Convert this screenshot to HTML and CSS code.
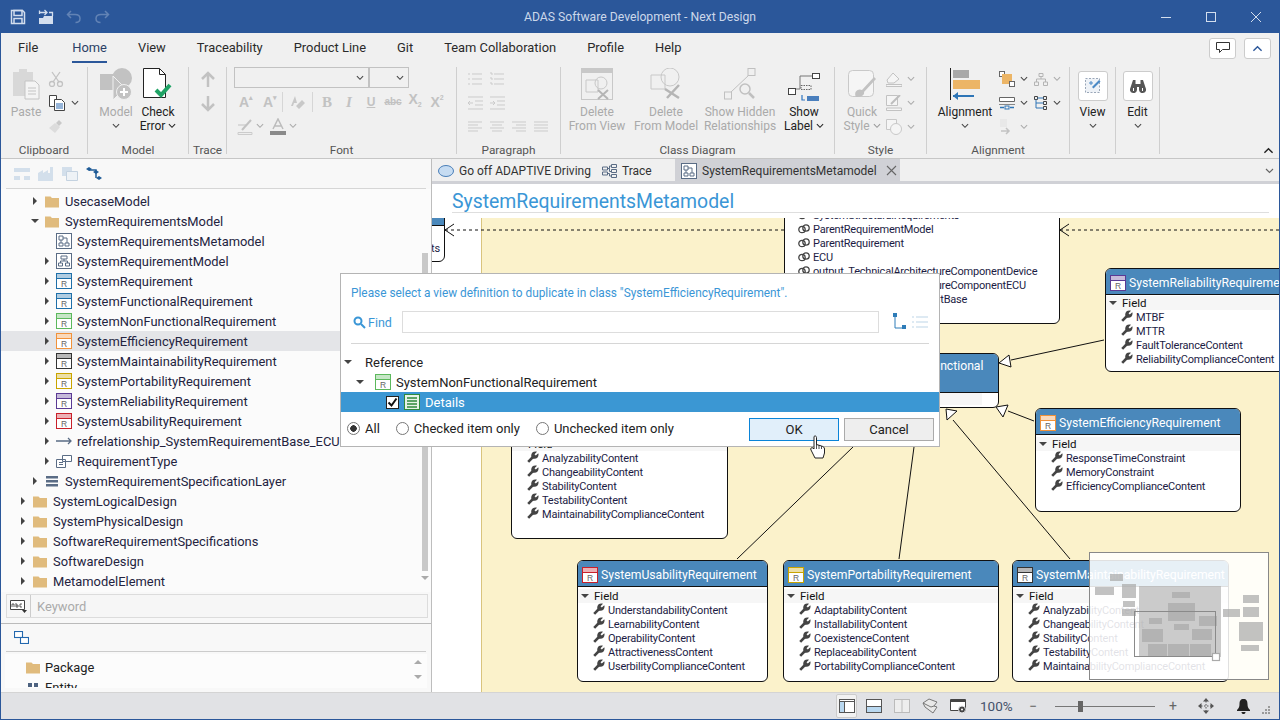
FILE: index.html
```html
<!DOCTYPE html>
<html lang="en">
<head>
<meta charset="utf-8">
<title>ADAS Software Development - Next Design</title>
<link rel="stylesheet" href="styles.css">
</head>
<body>
<svg class="defs" width="0" height="0">
  <symbol id="cls" viewBox="0 0 16 16"><rect x=".5" y=".5" width="15" height="15" fill="#fff" stroke="currentColor"/><rect x="1" y="1" width="14" height="4" fill="currentColor" opacity=".35"/><path d="M1 5.500h14" stroke="currentColor"/><text x="8" y="14" font-size="8.500" text-anchor="middle" fill="#666" font-family="Liberation Sans">R</text></symbol>
  <symbol id="folder" viewBox="0 0 14 14"><path d="M0 2.500h5.500l1.500 1.500h7v9.500H0z" fill="#e0bb7d"/></symbol>
  <symbol id="wrench" viewBox="0 0 12 12"><path d="M1.200 10.800L6 6" stroke="#444" stroke-width="2.600"/><path d="M4.300 5.500C3.700 2 6.500-.3 10 .8L7.500 3.300l1.300 1.300L11.300 2.200c1.100 3.400-1.600 6.300-5 5.500z" fill="#444"/></symbol>
  <symbol id="link" viewBox="0 0 12 10"><circle cx="4" cy="5.500" r="3.200" fill="none" stroke="#444" stroke-width="1.300"/><circle cx="8" cy="4" r="3.200" fill="none" stroke="#444" stroke-width="1.300"/></symbol>
  <symbol id="chev" viewBox="0 0 9 6"><path d="M1 1l3.500 3.500L8 1" fill="none" stroke="currentColor" stroke-width="1.200"/></symbol>
  <symbol id="diag" viewBox="0 0 16 16"><rect x=".5" y=".5" width="15" height="15" fill="#fff" stroke="#5a6c85"/><path d="M3 3h4v4H3zM9 10h4v3H9zM3 10h4v3H3zM5 7v3M7 5h4v5" fill="none" stroke="#5a6c85"/></symbol>
  <symbol id="diag2" viewBox="0 0 16 16"><rect x=".5" y=".5" width="15" height="15" fill="#fff" stroke="#5a6c85"/><path d="M5 3h6v3H5zM2.500 10h4v3h-4zM9.500 10h4v3h-4zM8 6v2M4.500 10V8h7v2" fill="none" stroke="#5a6c85"/></symbol>
</svg>

<div class="app">
  <header class="titlebar">
    <div class="qat">
      <svg width="16" height="16" viewBox="0 0 16 16"><path d="M1.500 1.500h11l2 2v11h-13z" fill="none" stroke="#d3deee" stroke-width="1.500"/><path d="M4 1.500h8v5H4zM4 14.500V9.500h8v5" fill="none" stroke="#d3deee" stroke-width="1.500"/></svg>
      <svg width="16" height="16" viewBox="0 0 16 16"><path d="M1 9h4l1-2h9v8H1z" fill="#d3deee"/><path d="M1.500 5V1.500M1.500 3.500h7M6.500 1l2.500 2.500L6.500 6M11 3.500h3.500V7" fill="none" stroke="#d3deee" stroke-width="1.300"/></svg>
      <svg class="dim" width="16" height="16" viewBox="0 0 16 16"><path d="M5 2L1.500 5.500 5 9M2 5.500h7c3 0 5 1.500 5 4s-2 4-4.500 4" fill="none" stroke="#6283b5" stroke-width="1.500"/></svg>
      <svg class="dim" width="16" height="16" viewBox="0 0 16 16"><path d="M11 2l3.500 3.500L11 9M14 5.500H7c-3 0-5 1.500-5 4s2 4 4.500 4" fill="none" stroke="#6283b5" stroke-width="1.500"/></svg>
    </div>
    <div class="apptitle">ADAS Software Development - Next Design</div>
    <div class="winctl">
      <svg width="12" height="12" viewBox="0 0 12 12"><path d="M1 6.500h10" stroke="#d3deee"/></svg>
      <svg width="12" height="12" viewBox="0 0 12 12"><rect x="1.500" y="1.500" width="9" height="9" fill="none" stroke="#d3deee"/></svg>
      <svg width="12" height="12" viewBox="0 0 12 12"><path d="M1 1l10 10M11 1L1 11" stroke="#d3deee"/></svg>
    </div>
  </header>

  <nav class="menubar">
    <span>File</span><span class="active">Home</span><span>View</span><span>Traceability</span><span>Product Line</span><span>Git</span><span>Team Collaboration</span><span>Profile</span><span>Help</span>
    <div class="menu-right">
      <button class="mini"><svg width="16" height="14" viewBox="0 0 16 14"><path d="M1.500 1.500h13v7h-7l-3 3v-3h-3z" fill="#fff" stroke="#333"/></svg></button>
      <button class="mini"><svg width="11" height="7" viewBox="0 0 9 6"><path d="M1 5l3.500-3.500L8 5" fill="none" stroke="#2b579a" stroke-width="1.200"/></svg></button>
    </div>
  </nav>

  <section class="ribbon">
    <div class="group g-clip">
      <div class="g-body">
        <div class="big w50 off"><div class="bi"><svg width="30" height="34" viewBox="0 0 30 34"><path d="M2 4h6V1h8v3h6v24H2z" fill="#d8d8d8"/><path d="M14 13h10l4 4v14H14z" fill="#f4f4f4" stroke="#c4c4c4"/><path d="M17 20h8M17 23h8M17 26h8" stroke="#c4c4c4"/></svg></div><span>Paste</span></div>
        <div class="col cx">
          <div class="row"><svg width="16" height="16" viewBox="0 0 16 16"><circle cx="4" cy="13" r="2.500" fill="none" stroke="#c2c2c2" stroke-width="1.300"/><circle cx="12" cy="13" r="2.500" fill="none" stroke="#c2c2c2" stroke-width="1.300"/><path d="M5 11L12 1M11 11L4 1" stroke="#c2c2c2" stroke-width="1.300"/></svg></div>
          <div class="row"><svg width="18" height="18" viewBox="0 0 18 18"><path d="M1.500 1.500h7v11h-7z" fill="#fff" stroke="#444"/><path d="M6.500 5.500h7l3 3v8h-10z" fill="#fff" stroke="#444"/><path d="M8 10h7M8 12h7M8 14h7" stroke="#2e6db4"/></svg><svg class="ch" width="8" height="6"><use href="#chev"/></svg></div>
          <div class="row"><svg width="16" height="16" viewBox="0 0 16 16"><path d="M1 9l6-5 5 4-5 6z" fill="#dcdcdc"/><path d="M8 4l3-3 3 3-3 3z" fill="#c9c9c9"/></svg></div>
        </div>
      </div>
      <div class="g-label">Clipboard</div>
    </div>

    <div class="group g-model">
      <div class="g-body">
        <div class="big w50 off"><div class="bi"><svg width="32" height="32" viewBox="0 0 32 32"><circle cx="22" cy="10" r="10" fill="#c2c2c2"/><path d="M0 6h16v16H0z" fill="#c2c2c2"/><path d="M13 8l12 12-12 12z" fill="#c2c2c2" stroke="#f0f0f0"/><circle cx="24" cy="24" r="7.500" fill="#c2c2c2" stroke="#f0f0f0"/><path d="M24 20v8M20 24h8" stroke="#fff" stroke-width="2"/></svg></div><span>Model</span><svg class="ch" width="8" height="6"><use href="#chev"/></svg></div>
        <div class="big w34"><div class="bi"><svg width="30" height="32" viewBox="0 0 30 32"><path d="M.5.500h16l6 6v23H.5z" fill="#fff" stroke="#222"/><path d="M16.500.500v6h6" fill="none" stroke="#222"/><path d="M13 22l5 5 9-10" fill="none" stroke="#1fa365" stroke-width="4"/></svg></div><span>Check</span><span>Error <svg class="ch2" width="8" height="6"><use href="#chev"/></svg></span></div>
      </div>
      <div class="g-label">Model</div>
    </div>

    <div class="group g-trace">
      <div class="g-body col-c">
        <div class="row"><svg width="14" height="17" viewBox="0 0 14 17"><path d="M7 16V2M1 8l6-6 6 6" fill="none" stroke="#c2c2c2" stroke-width="2.500"/></svg></div>
        <div class="row"><svg width="14" height="17" viewBox="0 0 14 17"><path d="M7 1v14M1 9l6 6 6-6" fill="none" stroke="#c2c2c2" stroke-width="2.500"/></svg></div>
      </div>
      <div class="g-label">Trace</div>
    </div>

    <div class="group g-font">
      <div class="g-body fontbody">
        <div class="selects"><div class="sel s1"><svg class="ch" width="8" height="6"><use href="#chev"/></svg></div><div class="sel s2"><svg class="ch" width="8" height="6"><use href="#chev"/></svg></div></div>
        <div class="frow r2">
          <span class="fi a1">A<sup>▴</sup></span><span class="fi a2">A<sup>▾</sup></span><i class="vs"></i>
          <span class="fi w28"><svg width="16" height="16" viewBox="0 0 16 16"><path d="M5 2l-4 10h2l1-3h3M9 15l-3-3 6-6 3 3z" fill="#c8c8c8"/></svg></span><i class="vs"></i>
          <span class="fi ml3 bold">B</span><span class="fi ital">I</span><span class="fi und">U</span><span class="fi strike">abc</span><span class="fi sub">X<small>2</small></span><span class="fi sup2">X<small>2</small></span>
        </div>
        <div class="frow r3">
          <svg width="16" height="17" viewBox="0 0 16 17"><path d="M1 14.500h14v2H1z" fill="#eee" stroke="#ccc"/><path d="M5 12l9-10" stroke="#c2c2c2" stroke-width="2"/><path d="M1 7h9" stroke="#c2c2c2"/></svg>
          <svg class="ch off-ch" width="8" height="6"><use href="#chev"/></svg>
          <svg class="ml7" width="16" height="17" viewBox="0 0 16 17"><path d="M3 11L8 1l5 10M5 8h6" fill="none" stroke="#bcbcbc" stroke-width="1.500"/><path d="M0 13h16v4H0z" fill="#8a8a8a"/></svg>
          <svg class="ch off-ch" width="8" height="6"><use href="#chev"/></svg>
        </div>
      </div>
      <div class="g-label">Font</div>
    </div>

    <div class="group g-para">
      <div class="g-body parabody">
        <div class="prow"><span class="pi"><svg width="16" height="14"><path d="M1 2h2M1 7h2M1 12h2M5 2h10M5 7h10M5 12h10" stroke="#cbcbcb"/></svg></span><span class="pi"><svg width="16" height="14"><path d="M1 1h2v2M1 6h2v2M1 11h2v2M5 2h10M5 7h10M5 12h10" fill="none" stroke="#cbcbcb"/></svg></span></div>
        <div class="prow"><span class="pi"><svg width="16" height="14"><path d="M1 1h15M8 5h8M8 9h8M1 13h15M6 7H1m2-2L1 7l2 2" fill="none" stroke="#cbcbcb"/></svg></span><span class="pi"><svg width="16" height="14"><path d="M1 1h15M8 5h8M8 9h8M1 13h15M1 7h5M4 5l2 2-2 2" fill="none" stroke="#cbcbcb"/></svg></span></div>
        <div class="prow"><span class="pi"><svg width="16" height="14"><path d="M1 2h14M1 5h10M1 8h14M1 11h10" stroke="#cbcbcb"/></svg></span><span class="pi"><svg width="16" height="14"><path d="M1 2h14M3 5h10M1 8h14M3 11h10" stroke="#cbcbcb"/></svg></span><span class="pi"><svg width="16" height="14"><path d="M1 2h14M5 5h10M1 8h14M5 11h10" stroke="#cbcbcb"/></svg></span><span class="pi"><svg width="16" height="14"><path d="M1 2h14M1 5h14M1 8h14M1 11h14" stroke="#cbcbcb"/></svg></span></div>
      </div>
      <div class="g-label">Paragraph</div>
    </div>

    <div class="group g-class">
      <div class="g-body">
        <div class="big w72 off"><div class="bi"><svg width="32" height="32" viewBox="0 0 32 32"><rect x=".5" y=".5" width="31" height="31" fill="none" stroke="#c8c8c8"/><rect width="32" height="5" fill="#c8c8c8"/><path d="M5 12h12v12H5z" fill="none" stroke="#c8c8c8"/><circle cx="20" cy="15" r="6" fill="none" stroke="#c8c8c8"/><path d="M17 22l10 9M27 22l-10 9" stroke="#b5b5b5" stroke-width="2"/></svg></div><span>Delete</span><span>From View</span></div>
        <div class="big w66 off"><div class="bi"><svg width="32" height="32" viewBox="0 0 32 32"><path d="M1 7h14v14H1z" fill="none" stroke="#c8c8c8"/><circle cx="20" cy="9" r="9" fill="none" stroke="#c8c8c8"/><path d="M15 21l14 9M29 17L17 30" stroke="#b5b5b5" stroke-width="2.500"/></svg></div><span>Delete</span><span>From Model</span></div>
        <div class="big w82 off"><div class="bi"><svg width="32" height="32" viewBox="0 0 32 32"><rect x="24" y=".5" width="7" height="7" fill="none" stroke="#c0c0c0"/><rect x=".5" y="24" width="7" height="7" fill="none" stroke="#c0c0c0"/><path d="M7 24L25 7" stroke="#c0c0c0"/><circle cx="21" cy="21" r="5" fill="#f0f0f0" stroke="#c0c0c0" stroke-width="1.500"/><path d="M25 25l5 5" stroke="#c0c0c0" stroke-width="2.500"/></svg></div><span>Show Hidden</span><span>Relationships</span></div>
        <div class="big w46"><div class="bi pt5"><svg width="32" height="28" viewBox="0 0 32 28"><rect x="24.500" y=".5" width="7" height="5" fill="#fff" stroke="#444"/><rect x=".5" y="15.500" width="7" height="6" fill="#fff" stroke="#444"/><path d="M24 3H12v13H8" fill="none" stroke="#777"/><rect x="13" y="12.500" width="10" height="4" fill="none" stroke="#666" stroke-dasharray="1.500 1"/><rect x="19" y="23" width="12" height="5" fill="#4a7fbd"/><path d="M14 22v5h3" fill="none" stroke="#2e75c0" stroke-width="1.200"/></svg></div><span>Show</span><span>Label <svg class="ch2" width="8" height="6"><use href="#chev"/></svg></span></div>
      </div>
      <div class="g-label">Class Diagram</div>
    </div>

    <div class="group g-style">
      <div class="g-body">
        <div class="big w54 off"><div class="bi pt4"><svg width="28" height="28" viewBox="0 0 28 28"><rect x=".5" y=".5" width="25" height="26" rx="4" fill="#f5f5f5" stroke="#c9c9c9"/><path d="M8 27c-3-6 3-9 6-7l12-13 2 2-12 13c1 3-3 5-8 5z" fill="#c2c2c2"/></svg></div><span>Quick</span><span>Style <svg class="ch2 dimch" width="8" height="6"><use href="#chev"/></svg></span></div>
        <div class="col stylecol">
          <div class="row"><svg width="16" height="16" viewBox="0 0 16 16"><path d="M1 9l6-7 6 6-5 4H2zM0 13.500h16v2H0z" fill="#f5f5f5" stroke="#c2c2c2"/></svg><svg class="ch off-ch" width="8" height="6"><use href="#chev"/></svg></div>
          <div class="row"><svg width="16" height="16" viewBox="0 0 16 16"><path d="M.5.500h11v10H.5zM.5 13h15v2.500H.5z" fill="#f5f5f5" stroke="#c2c2c2"/><path d="M5 9l9-9" stroke="#bdbdbd" stroke-width="2"/></svg><svg class="ch off-ch" width="8" height="6"><use href="#chev"/></svg></div>
          <div class="row"><svg width="16" height="16" viewBox="0 0 16 16"><path d="M.5.500h10v10H.5z" fill="#f5f5f5" stroke="#c8c8c8"/><circle cx="10" cy="10" r="5.500" fill="#f5f5f5" stroke="#c8c8c8"/></svg><svg class="ch off-ch" width="8" height="6"><use href="#chev"/></svg></div>
        </div>
      </div>
      <div class="g-label">Style</div>
    </div>

    <div class="group g-align">
      <div class="g-body">
        <div class="big w76"><div class="bi"><svg width="30" height="33" viewBox="0 0 30 33"><path d="M.5 0v32" stroke="#222"/><rect x="3" y="2" width="16" height="8" fill="#a8a8a8"/><rect x="3" y="12" width="27" height="9" fill="#ecb566"/><path d="M3 28h21" stroke="#2e75b6" stroke-width="2"/><path d="M8 24l-5 4 5 4z" fill="#2e75b6"/></svg></div><span>Alignment</span><svg class="ch" width="8" height="6"><use href="#chev"/></svg></div>
        <div class="col alcol1">
          <div class="row"><svg width="16" height="16" viewBox="0 0 16 16"><rect x=".5" y=".5" width="5" height="5" fill="#fff" stroke="#666"/><rect x="3" y="3" width="10" height="10" fill="#ecb566"/><rect x="10.500" y="10.500" width="5" height="5" fill="#fff" stroke="#666"/></svg><svg class="ch" width="8" height="6"><use href="#chev"/></svg></div>
          <div class="row"><svg width="16" height="16" viewBox="0 0 16 16"><path d="M.5 2.500h15v4H.5z" fill="#fff" stroke="#666"/><path d="M0 9.500h16" stroke="#888"/><rect x="6" y="11" width="4" height="3" fill="none" stroke="#2e75b6"/><path d="M1 12.500h4M11 12.500h4" stroke="#2e75b6" stroke-width="1.500"/></svg><svg class="ch" width="8" height="6"><use href="#chev"/></svg></div>
          <div class="row"><svg width="16" height="16" viewBox="0 0 16 16"><path d="M1 0h7v4H1zM1 4h7v4H1z" fill="#e8e8e8"/><path d="M2 12h8M7 9l3 3-3 3" fill="none" stroke="#c2c2c2" stroke-width="1.500"/></svg><svg class="ch off-ch" width="8" height="6"><use href="#chev"/></svg></div>
        </div>
        <div class="col alcol2">
          <div class="row"><svg width="14" height="13" viewBox="0 0 14 13"><path d="M5 .5h4v3H5zM.5 9h4v3.500h-4zM9.500 9h4v3.500h-4zM7 3.500V6M2.500 9V6h9v3" fill="none" stroke="#b4b4b4"/></svg><svg class="ch off-ch" width="8" height="6"><use href="#chev"/></svg></div>
          <div class="row"><svg width="14" height="14" viewBox="0 0 14 14"><path d="M.5.500h3v3h-3zM9.500.500h3v3h-3zM9.500 5.500h3v3h-3zM9.500 10.500h3v3h-3z" fill="none" stroke="#444"/><path d="M3.500 2h6M2 3.500V12h7.500M2 7h7.500" fill="none" stroke="#2e75b6"/></svg><svg class="ch" width="8" height="6"><use href="#chev"/></svg></div>
        </div>
      </div>
      <div class="g-label">Alignment</div>
    </div>

    <div class="group g-view">
      <div class="g-body"><div class="big wfull"><div class="bbox"><svg width="16" height="16" viewBox="0 0 16 16"><rect x=".5" y=".5" width="14" height="14" fill="#eef2f7" stroke="#9aa7b8" stroke-dasharray="2 1.500"/><path d="M7 9l7-7 1.500 1.500-7 7z" fill="#4a89c6"/><path d="M6 3v4M4 5h4" stroke="#4a89c6"/></svg></div><span>View</span><svg class="ch" width="8" height="6"><use href="#chev"/></svg></div></div>
    </div>
    <div class="group g-edit">
      <div class="g-body"><div class="big wfull"><div class="bbox"><svg width="16" height="13" viewBox="0 0 16 13"><path d="M3 0h2.500v4h5V0H13l3 9a3.500 3.500 0 1 1-7 1V7H7v3a3.500 3.500 0 1 1-7-1z" fill="#555"/><path d="M3.500 8v3M12.500 8v3" stroke="#fff"/></svg></div><span>Edit</span><svg class="ch" width="8" height="6"><use href="#chev"/></svg></div></div>
    </div>
    <svg class="collapse" width="11" height="7" viewBox="0 0 9 6"><path d="M1 5l3.500-3.500L8 5" fill="none" stroke="#222" stroke-width="1.200"/></svg>
  </section>

  <main class="main">
    <aside class="left">
      <div class="ltool">
        <svg width="16" height="14" viewBox="0 0 16 14"><path d="M0 1h16v4H0zM0 9h6v4H0zM10 9h6v4h-6z" fill="#d3dfeb"/></svg>
        <svg width="16" height="14" viewBox="0 0 16 14"><path d="M0 6l5-3v3l5-3v3h2V0h3v14H0z" fill="#d3dfeb"/></svg>
        <svg width="16" height="14" viewBox="0 0 16 14"><path d="M0 0h10v9H0z" fill="#d3dfeb"/><path d="M4.500 4.500h11v9h-11z" fill="#eef2f6" stroke="#c4d2e0"/></svg>
        <svg width="16" height="14" viewBox="0 0 16 14"><path d="M0 2l3-2 3 2-3 2zM7 5l3-2 3 2-3 2zM10 11l3-2 3 2-3 2z" fill="#1f5b97"/><path d="M3 3h7v8" fill="none" stroke="#1f5b97" stroke-width="1.500"/></svg>
      </div>
      <div class="treewrap">
        <div class="tree">
          <div class="r l1"><b class="ar"></b><svg class="ic" width="14" height="14"><use href="#folder"/></svg>UsecaseModel</div>
          <div class="r l1"><b class="ar dn"></b><svg class="ic" width="14" height="14"><use href="#folder"/></svg>SystemRequirementsModel</div>
          <div class="r l2"><b class="ar none"></b><svg class="ic" width="16" height="16"><use href="#diag"/></svg>SystemRequirementsMetamodel</div>
          <div class="r l2"><b class="ar"></b><svg class="ic" width="16" height="16"><use href="#diag2"/></svg>SystemRequirementModel</div>
          <div class="r l2"><b class="ar"></b><svg class="ic c-blue" width="16" height="16"><use href="#cls"/></svg>SystemRequirement</div>
          <div class="r l2"><b class="ar"></b><svg class="ic c-blue" width="16" height="16"><use href="#cls"/></svg>SystemFunctionalRequirement</div>
          <div class="r l2"><b class="ar"></b><svg class="ic c-green" width="16" height="16"><use href="#cls"/></svg>SystemNonFunctionalRequirement</div>
          <div class="r l2 sel-row"><b class="ar"></b><svg class="ic c-orange" width="16" height="16"><use href="#cls"/></svg>SystemEfficiencyRequirement</div>
          <div class="r l2"><b class="ar"></b><svg class="ic c-dark" width="16" height="16"><use href="#cls"/></svg>SystemMaintainabilityRequirement</div>
          <div class="r l2"><b class="ar"></b><svg class="ic c-yellow" width="16" height="16"><use href="#cls"/></svg>SystemPortabilityRequirement</div>
          <div class="r l2"><b class="ar"></b><svg class="ic c-purple" width="16" height="16"><use href="#cls"/></svg>SystemReliabilityRequirement</div>
          <div class="r l2"><b class="ar"></b><svg class="ic c-red" width="16" height="16"><use href="#cls"/></svg>SystemUsabilityRequirement</div>
          <div class="r l2"><b class="ar"></b><svg class="ic" width="16" height="16" viewBox="0 0 16 16"><path d="M0 8h15M12 5l3 3-3 3" fill="none" stroke="#5a6c85" stroke-width="1.300"/></svg>refrelationship_SystemRequirementBase_ECU</div>
          <div class="r l2"><b class="ar"></b><svg class="ic" width="16" height="16" viewBox="0 0 16 16"><path d="M6.500 2.500h9v6h-9zM.5 6.500h9v8h-9zM3 9.500h4M3 11.500h4" fill="#fff" stroke="#5a6c85"/></svg>RequirementType</div>
          <div class="r l1"><b class="ar"></b><svg class="ic" width="14" height="14" viewBox="0 0 14 14"><path d="M1 2h12v2.500H1zM1 6h12v2.500H1zM1 10h12v2.500H1z" fill="#5a6c85"/></svg>SystemRequirementSpecificationLayer</div>
          <div class="r l0"><b class="ar"></b><svg class="ic" width="14" height="14"><use href="#folder"/></svg>SystemLogicalDesign</div>
          <div class="r l0"><b class="ar"></b><svg class="ic" width="14" height="14"><use href="#folder"/></svg>SystemPhysicalDesign</div>
          <div class="r l0"><b class="ar"></b><svg class="ic" width="14" height="14"><use href="#folder"/></svg>SoftwareRequirementSpecifications</div>
          <div class="r l0"><b class="ar"></b><svg class="ic" width="14" height="14"><use href="#folder"/></svg>SoftwareDesign</div>
          <div class="r l0"><b class="ar"></b><svg class="ic" width="14" height="14"><use href="#folder"/></svg>MetamodelElement</div>
        </div>
        <div class="vscroll"><div class="thumb"></div><div class="sdn"></div></div>
      </div>
      <div class="searchbox">
        <div class="sb-icon"><svg width="17" height="13" viewBox="0 0 17 13"><path d="M.5.500h14v9H.5z" fill="#fff" stroke="#444"/><path d="M2 7V4h2v3M6 3v4h2V5H6M12 4h-2v3h2" fill="none" stroke="#333" stroke-width=".8"/><path d="M12 10h5l-2.500 3z" fill="#333"/></svg></div>
        <span class="kw">Keyword</span>
      </div>
      <div class="lsplit"></div>
      <div class="btool"><svg width="15" height="13" viewBox="0 0 15 13"><rect x=".5" y=".5" width="8" height="6" fill="#fff" stroke="#2468ae" stroke-width="1.100"/><rect x="6.500" y="6.500" width="8" height="6" fill="#fff" stroke="#2468ae" stroke-width="1.100"/></svg></div>
      <div class="palette">
        <div class="pal-list">
          <div class="pal"><svg class="ic" width="14" height="14"><use href="#folder"/></svg>Package</div>
          <div class="pal"><svg class="ic" width="14" height="14" viewBox="0 0 14 14"><path d="M2 3h4v4H2zM8 3h4v4H8z" fill="#4d6280"/></svg>Entity</div>
        </div>
        <div class="pal-scroll"><i class="up"></i><i class="down"></i></div>
      </div>
    </aside>

    <div class="work">
      <div class="doctabs">
        <div class="dt t1"><svg width="16" height="12" viewBox="0 0 16 12"><ellipse cx="8" cy="6" rx="7.500" ry="5.500" fill="#c6dcf2" stroke="#4a7fb8"/></svg>Go off ADAPTIVE Driving</div>
        <div class="dt t2"><svg width="15" height="14" viewBox="0 0 15 14"><path d="M.5 3h5v3h-5zM.5 8h5v3h-5zM9.500.500h5v3h-5zM9.500 5.500h5v3h-5zM9.500 10.500h5v3h-5zM5.500 4.500h2v-2.500h2M7.500 4.500v3h2M5.500 9.500h2v2.500h2" fill="none" stroke="#5a6c85"/></svg>Trace</div>
        <div class="dt t3"><svg width="16" height="16"><use href="#diag"/></svg>SystemRequirementsMetamodel<svg class="x" width="11" height="11" viewBox="0 0 11 11"><path d="M1 1l9 9M10 1l-9 9" stroke="#666" stroke-width="1.100"/></svg></div>
        <svg class="ch tabmenu" width="9" height="6"><use href="#chev"/></svg>
      </div>
      <div class="heading"><h1>SystemRequirementsMetamodel</h1></div>
      <div class="canvas">
        <div class="yellow"></div>
        <svg class="lines" width="848" height="473" viewBox="432 218 848 473">
          <g fill="none" stroke="#111">
            <path d="M445 230H784M1060 230H1280" stroke-dasharray="3 3"/>
            <path d="M454 224l-9 6 9 6M1069 224l-9 6 9 6"/>
            <path d="M1104 340L1011 360M1034 421L1008 411M953 420L1070 559M737 559L853 447M899 559L914 447"/>
            <path d="M999 363L1009 355 1011 367zM996 407L1008 405 1003 417zM946 409L957 411 947 420z" fill="#fff"/>
          </g>
        </svg>

        <div class="node n-tl"><div class="nh short"></div><div class="tl-text">Components</div></div>

        <div class="node n-big">
          <div class="it"><svg width="12" height="10"><use href="#link"/></svg>SystemStructuralRequirements</div>
          <div class="it"><svg width="12" height="10"><use href="#link"/></svg>ParentRequirementModel</div>
          <div class="it"><svg width="12" height="10"><use href="#link"/></svg>ParentRequirement</div>
          <div class="it"><svg width="12" height="10"><use href="#link"/></svg>ECU</div>
          <div class="it"><svg width="12" height="10"><use href="#link"/></svg>output_TechnicalArchitectureComponentDevice</div>
          <div class="it"><svg width="12" height="10"><use href="#link"/></svg>output_TechnicalArchitectureComponentECU</div>
          <div class="it"><svg width="12" height="10"><use href="#link"/></svg>output_SystemRequirementBase</div>
        </div>

        <div class="node n-rel">
          <div class="nh"><svg class="c-purple" width="16" height="16"><use href="#cls"/></svg>SystemReliabilityRequirement</div>
          <div class="nf"><b class="ar dn"></b>Field</div>
          <div class="ni"><svg width="12" height="12"><use href="#wrench"/></svg>MTBF</div>
          <div class="ni"><svg width="12" height="12"><use href="#wrench"/></svg>MTTR</div>
          <div class="ni"><svg width="12" height="12"><use href="#wrench"/></svg>FaultToleranceContent</div>
          <div class="ni"><svg width="12" height="12"><use href="#wrench"/></svg>ReliabilityComplianceContent</div>
        </div>

        <div class="node n-nf">
          <div class="nh tall"><svg class="c-green" width="16" height="16"><use href="#cls"/></svg>SystemNonFunctional</div>
          <div class="nf stub"></div>
        </div>

        <div class="node n-eff">
          <div class="nh"><svg class="c-orange" width="16" height="16"><use href="#cls"/></svg>SystemEfficiencyRequirement</div>
          <div class="nf"><b class="ar dn"></b>Field</div>
          <div class="ni"><svg width="12" height="12"><use href="#wrench"/></svg>ResponseTimeConstraint</div>
          <div class="ni"><svg width="12" height="12"><use href="#wrench"/></svg>MemoryConstraint</div>
          <div class="ni"><svg width="12" height="12"><use href="#wrench"/></svg>EfficiencyComplianceContent</div>
        </div>

        <div class="node n-mid">
          <div class="nh"><svg class="c-dark" width="16" height="16"><use href="#cls"/></svg>SystemMaintainabilityRequirement</div>
          <div class="nf"><b class="ar dn"></b>Field</div>
          <div class="ni"><svg width="12" height="12"><use href="#wrench"/></svg>AnalyzabilityContent</div>
          <div class="ni"><svg width="12" height="12"><use href="#wrench"/></svg>ChangeabilityContent</div>
          <div class="ni"><svg width="12" height="12"><use href="#wrench"/></svg>StabilityContent</div>
          <div class="ni"><svg width="12" height="12"><use href="#wrench"/></svg>TestabilityContent</div>
          <div class="ni"><svg width="12" height="12"><use href="#wrench"/></svg>MaintainabilityComplianceContent</div>
        </div>

        <div class="node n-usa">
          <div class="nh"><svg class="c-red" width="16" height="16"><use href="#cls"/></svg>SystemUsabilityRequirement</div>
          <div class="nf"><b class="ar dn"></b>Field</div>
          <div class="ni"><svg width="12" height="12"><use href="#wrench"/></svg>UnderstandabilityContent</div>
          <div class="ni"><svg width="12" height="12"><use href="#wrench"/></svg>LearnabilityContent</div>
          <div class="ni"><svg width="12" height="12"><use href="#wrench"/></svg>OperabilityContent</div>
          <div class="ni"><svg width="12" height="12"><use href="#wrench"/></svg>AttractivenessContent</div>
          <div class="ni"><svg width="12" height="12"><use href="#wrench"/></svg>UserbilityComplianceContent</div>
        </div>

        <div class="node n-por">
          <div class="nh"><svg class="c-yellow" width="16" height="16"><use href="#cls"/></svg>SystemPortabilityRequirement</div>
          <div class="nf"><b class="ar dn"></b>Field</div>
          <div class="ni"><svg width="12" height="12"><use href="#wrench"/></svg>AdaptabilityContent</div>
          <div class="ni"><svg width="12" height="12"><use href="#wrench"/></svg>InstallabilityContent</div>
          <div class="ni"><svg width="12" height="12"><use href="#wrench"/></svg>CoexistenceContent</div>
          <div class="ni"><svg width="12" height="12"><use href="#wrench"/></svg>ReplaceabilityContent</div>
          <div class="ni"><svg width="12" height="12"><use href="#wrench"/></svg>PortabilityComplianceContent</div>
        </div>

        <div class="node n-mai">
          <div class="nh"><svg class="c-dark" width="16" height="16"><use href="#cls"/></svg>SystemMaintainabilityRequirement</div>
          <div class="nf"><b class="ar dn"></b>Field</div>
          <div class="ni"><svg width="12" height="12"><use href="#wrench"/></svg>AnalyzabilityContent</div>
          <div class="ni"><svg width="12" height="12"><use href="#wrench"/></svg>ChangeabilityContent</div>
          <div class="ni"><svg width="12" height="12"><use href="#wrench"/></svg>StabilityContent</div>
          <div class="ni"><svg width="12" height="12"><use href="#wrench"/></svg>TestabilityContent</div>
          <div class="ni"><svg width="12" height="12"><use href="#wrench"/></svg>MaintainabilityComplianceContent</div>
        </div>

        <svg class="minimap" width="180" height="128" viewBox="1089 552 180 128">
          <rect x="1089.500" y="552.500" width="179" height="127" fill="#fff" fill-opacity=".87" stroke="#888"/>
          <g fill="#a8a8a8" fill-opacity=".7">
            <rect x="1139" y="586" width="82" height="71" fill-opacity=".6"/>
            <rect x="1172" y="592" width="18" height="6"/><rect x="1168" y="603" width="27" height="18"/><rect x="1199" y="616" width="18" height="10"/><rect x="1149" y="618" width="13" height="6"/><rect x="1174" y="624" width="15" height="6"/><rect x="1142" y="629" width="21" height="13"/><rect x="1192" y="629" width="20" height="11"/><rect x="1148" y="644" width="19" height="13"/><rect x="1168" y="644" width="21" height="13"/><rect x="1190" y="644" width="21" height="13"/>
            <rect x="1110" y="574" width="13" height="7"/><rect x="1095" y="587" width="19" height="8"/><rect x="1122" y="584" width="14" height="14"/><rect x="1123" y="601" width="12" height="6"/><rect x="1122" y="609" width="14" height="7"/>
            <rect x="1243" y="595" width="16" height="8"/><rect x="1243" y="607" width="16" height="10"/><rect x="1223" y="609" width="17" height="8"/><rect x="1239" y="622" width="24" height="19"/><rect x="1241" y="645" width="18" height="6"/>
          </g>
          <rect x="1134.500" y="611.500" width="81" height="45" fill="none" stroke="#8a8a8a"/>
          <rect x="1212.500" y="653.500" width="7" height="7" fill="#fff" stroke="#aaa" stroke-width="1.200"/>
        </svg>
      </div>
    </div>
  </main>

  <footer class="status">
    <span class="cell on"><svg width="16" height="14" viewBox="0 0 16 14"><rect x=".5" y=".5" width="15" height="13" fill="#fff" stroke="#555"/><rect x="1" y="3" width="4" height="10" fill="#b9d8f0"/><path d="M1 2.500h14M5.500 3v10" stroke="#555"/></svg></span>
    <span class="cell"><svg width="16" height="14" viewBox="0 0 16 14"><rect x=".5" y=".5" width="15" height="13" fill="#fff" stroke="#555"/><rect x="1" y="8" width="14" height="5" fill="#b9d8f0"/><path d="M1 7.500h14" stroke="#555"/></svg></span>
    <span class="cell"><svg width="16" height="14" viewBox="0 0 16 14"><rect x=".5" y=".5" width="15" height="13" fill="#eee" stroke="#bbb"/><path d="M8 1v12" stroke="#bbb"/></svg></span>
    <span class="cell"><svg width="17" height="16" viewBox="0 0 17 16"><path d="M1 5l6-4 8 3-3 4 3 1-4 6-8-6z" fill="#e8e8e8" stroke="#777"/><path d="M1 5l8 4 3-1" fill="none" stroke="#777"/></svg></span>
    <span class="cell"><svg width="17" height="16" viewBox="0 0 17 16"><path d="M.5 1.500h15v11H.5z" fill="#fff" stroke="#444"/><path d="M1 3h14" stroke="#444" stroke-width="2"/><circle cx="12" cy="11.500" r="3.500" fill="#444" stroke="#e1e2e5"/><circle cx="12" cy="11.500" r="1" fill="#fff"/></svg></span>
    <span class="zoomtxt">100%</span>
    <span class="zm">−</span>
    <span class="slider"><i></i></span>
    <span class="zp">+</span>
    <svg class="mv" width="16" height="16" viewBox="0 0 16 16"><path d="M8 0l3 3.500H5zM8 16l3-3.500H5zM0 8l3.500-3v6zM16 8l-3.500-3v6z" fill="#555"/><path d="M8 3v10M3 8h10" stroke="#555" stroke-width="1" stroke-dasharray="1.500 1.500"/></svg>
    <svg class="bell" width="15" height="15" viewBox="0 0 15 15"><path d="M7.500 0c3 0 4 2 4 5 0 3 .8 4.500 2.500 6v1H1v-1c1.700-1.500 2.500-3 2.500-6 0-3 1-5 4-5zM5.500 13h4c0 1.500-1 2-2 2s-2-.5-2-2z" fill="#222"/></svg>
    <svg class="grip" width="8" height="8" viewBox="0 0 8 8"><path d="M6 0h2v2H6zM3 3h2v2H3zM6 3h2v2H6zM0 6h2v2H0zM3 6h2v2H3zM6 6h2v2H6z" fill="#9a9a9a"/></svg>
  </footer>

  <div class="dialog">
    <div class="d-msg">Please select a view definition to duplicate in class "SystemEfficiencyRequirement".</div>
    <div class="d-find">
      <span class="d-flabel"><svg width="13" height="13" viewBox="0 0 13 13"><circle cx="5" cy="5" r="3.500" fill="none" stroke="#3a96d6" stroke-width="2"/><path d="M8 8l4 4" stroke="#3a96d6" stroke-width="2"/></svg>Find</span>
      <div class="d-input"></div>
      <svg class="d-i1" width="16" height="18" viewBox="0 0 16 18"><rect x="1" y="0" width="4" height="4" fill="#2e7cb8"/><path d="M3 4v11h8" fill="none" stroke="#2e7cb8"/><rect x="10" y="12" width="4" height="4" fill="#2e7cb8"/></svg>
      <svg class="d-i2" width="16" height="12" viewBox="0 0 16 12"><path d="M0 1h2M4 1h12M0 6h2M4 6h12M0 11h2M4 11h12" stroke="#d3e3f0" stroke-width="1.500"/></svg>
    </div>
    <div class="d-sep"></div>
    <div class="d-tree">
      <div class="dr d0"><b class="ar dn"></b>Reference</div>
      <div class="dr d1"><b class="ar dn"></b><svg class="c-green" width="16" height="16"><use href="#cls"/></svg>SystemNonFunctionalRequirement</div>
      <div class="dr d2 picked">
        <svg width="13" height="13" viewBox="0 0 13 13"><rect x=".5" y=".5" width="12" height="12" fill="#fff" stroke="#222"/><path d="M2.500 6.500l3 3 5-7" fill="none" stroke="#111" stroke-width="2"/></svg>
        <svg width="16" height="16" viewBox="0 0 16 16"><rect x=".5" y=".5" width="15" height="15" fill="#e7f3e7" stroke="#2f8a3c"/><path d="M3 4h10M3 7h10M3 10h10M3 13h10" stroke="#2f8a3c" stroke-width="1.300"/></svg>
        Details
      </div>
    </div>
    <div class="d-foot">
      <label class="rd rd1"><i class="radio on"></i>All</label>
      <label class="rd rd2"><i class="radio"></i>Checked item only</label>
      <label class="rd rd3"><i class="radio"></i>Unchecked item only</label>
      <div class="d-btns"><button class="btn ok">OK</button><button class="btn cancel">Cancel</button></div>
    </div>
  </div>
  <svg class="hand" width="15" height="24" viewBox="0 0 15 24"><path d="M4 1.500c1 -1 2.500 -.5 2.500 1v7l5 1.500c2 .6 3 1.500 3 3v4l-1.500 5H5L1 15c-1-1.500.5-3 2-2l1 1z" fill="#fff" stroke="#222"/><path d="M6.500 9v5M9 10v4M11.500 11v3" stroke="#222" stroke-width=".8"/></svg>
</div>
</body>
</html>
```
FILE: styles.css
```css
* { box-sizing: border-box; }
html, body { margin: 0; padding: 0; }
body { width: 1280px; height: 720px; overflow: hidden; font-family: Roboto, "Noto Sans", sans-serif; font-size: 12.9px; color: #222; }
.defs { position: absolute; }
svg { display: block; flex: none; }
.app { position: relative; width: 1280px; height: 720px; border: 1px solid #2b579a; background: #f0f0f0; display: flex; flex-direction: column; overflow: hidden; }

.c-blue { color: #1f6fa8; } .c-green { color: #5cb85c; } .c-orange { color: #f0923b; }
.c-dark { color: #333; } .c-yellow { color: #c9a400; } .c-purple { color: #5b3a94; } .c-red { color: #c8202a; }

/* title bar */
.titlebar { height: 32px; flex: none; background: #2b579a; display: flex; align-items: center; position: relative; }
.qat { display: flex; gap: 12px; padding-left: 9px; }
.apptitle { flex: 1; text-align: center; color: #cbd7ea; font-size: 12.2px; margin-left: 10px; }
.winctl { display: flex; gap: 33px; padding-right: 17px; }

/* menu */
.menubar { height: 30px; flex: none; display: flex; align-items: center; padding-left: 17px; gap: 31px; font-size: 12.9px; color: #2a2a2a; }
.menubar > span { position: relative; top: -1px; }
.menubar .active { margin-left: 3px; color: #2b3f66; }
.menubar .active::after { content: ""; position: absolute; left: 0; right: 0; top: 21px; height: 2px; background: #2b579a; }
.menu-right { margin-left: auto; display: flex; gap: 8px; padding-right: 8px; }
.mini { width: 27px; height: 21px; background: #fff; border: 1px solid #ccc; border-radius: 3px; padding: 0; display: flex; align-items: center; justify-content: center; }

/* ribbon */
.ribbon { height: 95px; flex: none; display: flex; position: relative; font-size: 12px; }
.group { margin-top: 4px; height: 87px; border-right: 1px solid #cfcfcf; flex: none; }
.g-body { height: 76px; display: flex; }
.g-label { text-align: center; line-height: 14px; font-size: 11.8px; color: #555; }
.g-clip { width: 87px; } .g-model { width: 101px; } .g-trace { width: 38px; } .g-font { width: 230px; }
.g-para { width: 104px; } .g-class { width: 274px; } .g-style { width: 92px; } .g-align { width: 143px; }
.g-view { width: 46px; } .g-edit { width: 44px; }
.big { display: flex; flex-direction: column; align-items: center; line-height: 14px; white-space: nowrap; color: #222; }
.big.off { color: #aaa; }
.bi { height: 38px; display: flex; align-items: flex-start; padding-top: 1px; }
.pt5 { padding-top: 6px; } .pt4 { padding-top: 3px; }
.w50 { width: 50px; } .w34 { width: 34px; } .w72 { width: 72px; } .w66 { width: 66px; } .w82 { width: 82px; } .w46 { width: 46px; } .w54 { width: 54px; } .w76 { width: 76px; } .wfull { width: 100%; }
.g-model .g-body { padding-left: 3px; }
.col { display: flex; flex-direction: column; }
.row { height: 24px; display: flex; align-items: center; gap: 3px; }
.ch { color: #444; margin: 4px auto 0; }
.ch2 { display: inline-block; color: #222; vertical-align: 1px; }
.dimch { color: #999; }
.off-ch { color: #aaa; margin: 0 0 0 3px; }
.row .ch { margin: 0 0 0 2px; }
.cx { margin-left: -3px; }
.col-c { flex-direction: column; align-items: center; }
.fontbody { flex-direction: column; padding-left: 7px; }
.selects { display: flex; height: 23px; flex: none; }
.sel { height: 21px; border: 1px solid #c2c2c2; display: flex; align-items: center; justify-content: flex-end; padding-right: 4px; }
.sel .ch { margin: 0; }
.s1 { width: 135px; } .s2 { width: 40px; }
.frow { display: flex; align-items: center; height: 24px; flex: none; }
.fi { width: 24px; text-align: center; color: #c2c2c2; font-size: 14px; font-weight: 700; font-family: "Liberation Sans", sans-serif; display: flex; justify-content: center; line-height: 16px; }
.fi sup { font-size: 7px; line-height: 8px; }
.vs { width: 1px; height: 20px; background: #d6d6d6; margin: 0 1px 0 0; }
.w28 { width: 28px; }
.ml3 { margin-left: 2px; }
.bold, .ital, .und, .strike, .sub, .sup2 { width: 22px; }
.bold { font-family: "Liberation Serif", serif; font-size: 15px; }
.ital { font-style: italic; font-family: "Liberation Serif", serif; font-size: 15px; }
.und { text-decoration: underline; font-size: 12px; }
.strike { text-decoration: line-through; font-size: 10px; }
.sub small { font-size: 7px; padding-top: 6px; } .sup2 small { font-size: 7px; line-height: 8px; }
.r3 { padding-left: 3px; }
.ml7 { margin-left: 6px; }
.parabody { flex-direction: column; padding-left: 7px; }
.prow { height: 24px; display: flex; align-items: center; }
.pi { width: 22px; display: flex; justify-content: center; }
.stylecol { margin-left: -3px; }
.alcol1 { margin-left: -4px; width: 33px; }
.alcol2 { margin-left: 2px; }
.bbox { width: 30px; height: 30px; margin: 4px 0 4px; background: #fff; border: 1px solid #ccc; border-radius: 3px; display: flex; align-items: center; justify-content: center; }
.collapse { position: absolute; right: 5px; top: 84px; }

/* main */
.main { flex: 1; min-height: 0; display: flex; border-top: 1px solid #c6c6c6; }
.left { width: 431px; flex: none; background: #f8f8f8; border-right: 1px solid #bdbdbd; display: flex; flex-direction: column; }
.ltool { height: 30px; flex: none; margin: 0 5px; padding-left: 8px; display: flex; align-items: center; gap: 8px; border-bottom: 1px solid #d6d6d6; }
.treewrap { height: 403px; flex: none; display: flex; background: #fbfbfb; }
.tree { flex: 1; min-width: 0; overflow: hidden; padding-top: 2px; }
.r { height: 20px; display: flex; align-items: center; white-space: nowrap; color: #232340; }
.ar { display: block; width: 0; height: 0; border-left: 4px solid #444; border-top: 4px solid transparent; border-bottom: 4px solid transparent; flex: none; }
.ar.dn { border-left: 4px solid transparent; border-right: 4px solid transparent; border-top: 4px solid #444; border-bottom: 0; }
.ar.none { visibility: hidden; }
.r .ar { margin-right: 8px; }
.r .ar.dn { margin-left: -2px; margin-right: 6px; }
.r .ic { margin-right: 6px; }
.l0 { padding-left: 20px; } .l1 { padding-left: 32px; } .l2 { padding-left: 44px; }
.r.l2 .ar { margin-right: 7px; }
.l2 .ic { margin-right: 5px; }
.sel-row { background: #e4e5e8; }
.vscroll { width: 9px; margin-right: 2px; display: flex; flex-direction: column; align-items: center; padding-top: 64px; flex: none; }
.thumb { width: 6px; height: 318px; background: #c8c8c8; flex: none; }
.sdn { width: 0; height: 0; border-left: 4px solid transparent; border-right: 4px solid transparent; border-top: 4px solid #aaa; margin-top: 5px; }
.searchbox { height: 24px; flex: none; margin: 2px 3px 0 5px; border: 1px solid #dcdcdc; background: #f6f6f6; display: flex; align-items: center; }
.sb-icon { width: 24px; height: 22px; border-right: 1px solid #ccc; display: flex; align-items: center; justify-content: center; }
.kw { padding-left: 6px; color: #aaa; }
.lsplit { height: 1px; flex: none; background: #bbb; margin-top: 5px; }
.btool { height: 28px; flex: none; margin: 0 5px; padding-left: 8px; display: flex; align-items: center; border-bottom: 1px solid #ccc; }
.palette { flex: 1; min-height: 0; display: flex; margin: 2px 4px 4px 4px; background: #fcfcfc; overflow: hidden; }
.pal-list { flex: 1; overflow: hidden; padding-top: 3px; }
.pal { height: 20px; display: flex; align-items: center; padding-left: 21px; gap: 5px; }
.pal-scroll { width: 12px; display: flex; flex-direction: column; align-items: center; gap: 11px; padding-top: 6px; margin-right: 3px; }
.pal-scroll i { width: 0; height: 0; border-left: 4px solid transparent; border-right: 4px solid transparent; }
.pal-scroll .up { border-bottom: 4px solid #aaa; } .pal-scroll .down { border-top: 4px solid #aaa; }

/* doc */
.work { flex: 1; min-width: 0; display: flex; flex-direction: column; background: #fff; }
.doctabs { height: 25px; flex: none; background: #f0f0f0; border-bottom: 3px solid #d0d1d6; display: flex; align-items: stretch; font-size: 12px; }
.dt { display: flex; align-items: center; gap: 5px; white-space: nowrap; color: #333; padding-left: 6px; padding-top: 1px; flex: none; }
.t1 { width: 163px; }
.t2 { width: 80px; padding-left: 7px; }
.t3 { width: 225px; background: #d0d1d6; padding-left: 6px; }
.t3 .x { margin-left: 4px; }
.tabmenu { margin: 9px 5px 0 auto; color: #666; }
.heading { height: 34px; flex: none; padding: 0 10px 0 20px; }
.heading h1 { margin: 0; height: 29px; font-weight: 400; font-size: 19.4px; line-height: 35px; color: #3a96d6; border-bottom: 1px solid #dedede; white-space: nowrap; }
.canvas { flex: 1; min-height: 0; position: relative; overflow: hidden; background: #fff; }
.yellow { position: absolute; left: 49px; right: 0; top: 0; bottom: 0; background: #fbf2cb; border-left: 1px solid #d9c47d; }
.lines { position: absolute; left: 0; top: 0; }
.node { position: absolute; background: #fff; border: 1px solid #111; border-radius: 6px; overflow: hidden; font-size: 11px; letter-spacing: -.2px; color: #1c1c44; }
.nh { height: 26px; background: #4a88bb; border-bottom: 1px solid #111; color: #fff; display: flex; align-items: center; padding: 2px 0 0 4px; gap: 3px; font-size: 12.2px; letter-spacing: 0; white-space: nowrap; }
.nh.tall { height: 39px; align-items: flex-start; padding-top: 5px; }
.nh.short { height: 17px; padding: 0; }
.nf { height: 14px; margin-top: 2px; background: #f6f6f6; display: flex; align-items: center; padding-left: 3px; gap: 5px; color: #111; font-size: 11.5px; letter-spacing: 0; }
.nf.stub { height: 12px; margin-right: 16px; margin-top: 0; }
.n-rel .nf { margin-top: 1px; }
.ni { height: 14px; display: flex; align-items: center; padding-left: 15px; gap: 3px; white-space: nowrap; }
.ni svg { margin-top: -3px; }
.it { height: 14px; display: flex; align-items: center; padding-left: 13px; gap: 3px; white-space: nowrap; }
.n-tl { left: -100px; top: -10px; width: 113px; height: 54px; }
.tl-text { text-align: right; padding: 16px 4px 0 0; }
.n-big { left: 352px; top: -20px; width: 276px; height: 126px; padding-top: 9px; }
.n-rel { left: 673px; top: 50px; width: 240px; height: 104px; }
.n-nf { left: 408px; top: 135px; width: 159px; height: 55px; }
.n-eff { left: 603px; top: 190px; width: 206px; height: 104px; }
.n-mid { left: 79px; top: 190px; width: 217px; height: 131px; }
.n-usa { left: 145px; top: 342px; width: 191px; height: 122px; }
.n-por { left: 351px; top: 342px; width: 216px; height: 122px; }
.n-mai { left: 580px; top: 342px; width: 217px; height: 122px; }
.minimap { position: absolute; left: 657px; top: 334px; }

/* status */
.status { height: 27px; flex: none; background: #e1e2e5; display: flex; align-items: center; padding-left: 831px; border-top: 1px solid #d4d4d4; color: #444; }
.cell { width: 28px; height: 24px; display: flex; align-items: center; justify-content: center; }
.cell.on { width: 21px; margin-left: 4px; margin-right: 3px; background: #f2f2f2; border: 1px solid #ccc; border-radius: 2px; }
.zoomtxt { margin-left: 8px; width: 36px; font-size: 13.5px; color: #44516a; }
.zm, .zp { width: 12px; text-align: center; font-size: 14px; color: #666; }
.zm { margin-left: 11px; }
.slider { margin-left: 16px; width: 100px; height: 1px; background: #777; position: relative; }
.slider i { position: absolute; left: 23px; top: -5px; width: 5px; height: 11px; background: #666; }
.zp { margin-left: 12px; }
.mv { margin-left: 19px; }
.bell { margin-left: 22px; }
.grip { margin-left: 11px; margin-top: 8px; }

/* dialog */
.dialog { position: absolute; left: 339px; top: 272px; width: 600px; height: 174px; background: #fff; border: 1px solid #b4b4b4; display: flex; flex-direction: column; font-size: 13px; }
.d-msg { height: 37px; line-height: 38px; padding-left: 10px; color: #3a96d6; font-size: 11.85px; white-space: nowrap; flex: none; }
.d-find { height: 22px; flex: none; display: flex; align-items: center; padding-left: 12px; }
.d-flabel { width: 49px; display: flex; align-items: center; gap: 2px; color: #3a96d6; font-size: 12.5px; }
.d-input { width: 477px; height: 22px; border: 1px solid #ddd; }
.d-i1 { margin-left: 13px; } .d-i2 { margin-left: 4px; }
.d-sep { height: 1px; margin: 10px 10px 0; background: #d6d6d6; flex: none; }
.d-tree { padding-top: 8px; flex: none; }
.dr { height: 20px; display: flex; align-items: center; white-space: nowrap; }
.dr .ar { margin-right: 13px; }
.d0 { padding-left: 3px; }
.d1 { padding-left: 15px; }
.d1 .ar { margin-right: 13px; }
.d1 svg { margin-right: 5px; margin-left: -2px; }
.d2 { padding-left: 45px; gap: 5px; }
.picked { background: #3b97d3; color: #fff; }
.d-foot { flex: 1; display: flex; align-items: center; padding-left: 6px; }
.rd { display: flex; align-items: center; gap: 5px; position: relative; top: -1px; }
.rd2 { margin-left: 16px; } .rd3 { margin-left: 16px; }
.radio { width: 13px; height: 13px; border: 1px solid #777; border-radius: 50%; background: #fff; display: block; }
.radio.on { background: radial-gradient(circle, #333 0 3px, #fff 3.5px); }
.d-btns { margin-left: auto; display: flex; gap: 5px; padding-right: 5px; }
.btn { width: 90px; height: 23px; font: inherit; color: #222; padding: 0; }
.ok { background: #e1effa; border: 1px solid #0a84d8; }
.cancel { background: #eee; border: 1px solid #aaa; }
.hand { position: absolute; left: 809px; top: 434px; }
```
